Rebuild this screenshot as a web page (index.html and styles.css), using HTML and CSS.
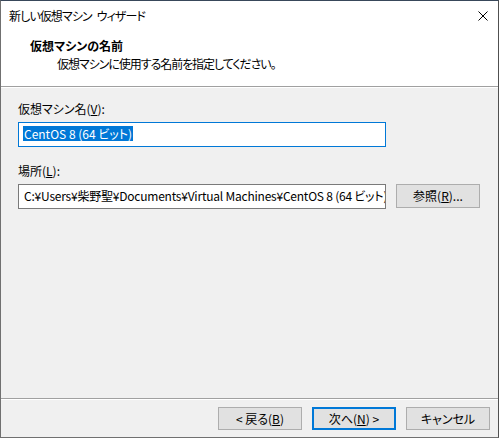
FILE: index.html
```html
<!DOCTYPE html>
<html lang="ja">
<head>
<meta charset="utf-8">
<title>新しい仮想マシン ウィザード</title>
<link rel="stylesheet" href="styles.css">
</head>
<body>
<div class="window">
  <div class="titlebar">
    <span class="title">新しい仮想マシン ウィザード</span>
    <span class="close"><svg width="10" height="10" viewBox="0 0 10 10"><path d="M0.5 0.5L9.5 9.5M9.5 0.5L0.5 9.5" stroke="#000" stroke-width="1" fill="none"/></svg></span>
  </div>
  <div class="header">
    <div class="h-title">仮想マシンの名前</div>
    <div class="h-sub">仮想マシンに使用する名前を指定してください。</div>
  </div>
  <div class="content">
    <div class="label">仮想マシン名(<u>V</u>):</div>
    <div class="field focused"><span class="sel">CentOS 8 (64 ビット)</span></div>
    <div class="label second">場所(<u>L</u>):</div>
    <div class="row">
      <div class="field path"><span class="text">C:¥Users¥柴野聖¥Documents¥Virtual Machines¥CentOS 8 (64 ビット)</span></div>
      <div class="btn browse">参照(<u>R</u>)...</div>
    </div>
  </div>
  <div class="footer">
    <div class="btn">&lt; 戻る(<u>B</u>)</div>
    <div class="btn default">次へ(<u>N</u>) &gt;</div>
    <div class="btn">キャンセル</div>
  </div>
</div>
</body>
</html>
```

FILE: styles.css
```css
html, body {
  margin: 0;
  padding: 0;
  width: 499px;
  height: 438px;
  overflow: hidden;
  background: #f0f0f0;
}
body {
  font-family: "Noto Sans CJK JP", "Noto Sans", sans-serif;
  font-size: 12px;
  color: #000;
  font-feature-settings: "palt";
}
u { text-decoration: underline; text-underline-offset: 1px; }
.window {
  box-sizing: border-box;
  width: 499px;
  height: 438px;
  border-top: 1px solid #38475a;
  border-left: 1px solid #707070;
  border-right: 1px solid #505050;
  border-bottom: 1px solid #707070;
  background: #f0f0f0;
  display: flex;
  flex-direction: column;
}
.titlebar {
  height: 30px;
  background: #fff;
  display: flex;
  align-items: center;
  justify-content: space-between;
  padding: 0 10px 0 8px;
}
.title { line-height: 16px; letter-spacing: -0.9px; word-spacing: 3px; }
.close { display: flex; }
.header {
  height: 56px;
  background: #fff;
  border-bottom: 1px solid #a0a0a0;
  box-shadow: 0 1px 0 #fff;
  box-sizing: border-box;
  padding: 6px 0 0 29px;
}
.h-title {
  font-weight: bold;
  line-height: 18px;
}
.h-sub {
  padding-left: 27px;
  line-height: 17px;
  letter-spacing: -1.05px;
}
.content {
  flex: 1;
  padding: 13px 0 0 17px;
  margin-top: 1px;
}
.label { line-height: 16px; }
.label.second { margin-top: 16px; }
.field {
  box-sizing: border-box;
  width: 368px;
  height: 25px;
  border: 1px solid #7a7a7a;
  background: #fff;
  margin-top: 5px;
  padding: 3px 0 0 4px;
  overflow: hidden;
  white-space: nowrap;
  line-height: 16px;
}
.field.focused { border-color: #0078d7; }
.sel {
  background: #0078d7;
  color: #fff;
  padding: 0 1px;
  display: inline-block;
  line-height: 15px;
}
.field.path { padding-left: 5px; letter-spacing: -0.22px; }
.row {
  display: flex;
  align-items: flex-start;
  gap: 10px;
}
.btn {
  box-sizing: border-box;
  width: 84px;
  height: 23px;
  background: #e1e1e1;
  border: 1px solid #adadad;
  display: flex;
  align-items: center;
  justify-content: center;
  line-height: 16px;
}
.btn.browse { margin-top: 5px; height: 24px; }
.btn.default { border: 2px solid #0078d7; }
.footer {
  height: 39px;
  border-top: 1px solid #a0a0a0;
  box-shadow: inset 0 1px 0 #fff;
  display: flex;
  justify-content: flex-end;
  gap: 10px;
  padding: 8px 8px 0 0;
  box-sizing: border-box;
}
```
